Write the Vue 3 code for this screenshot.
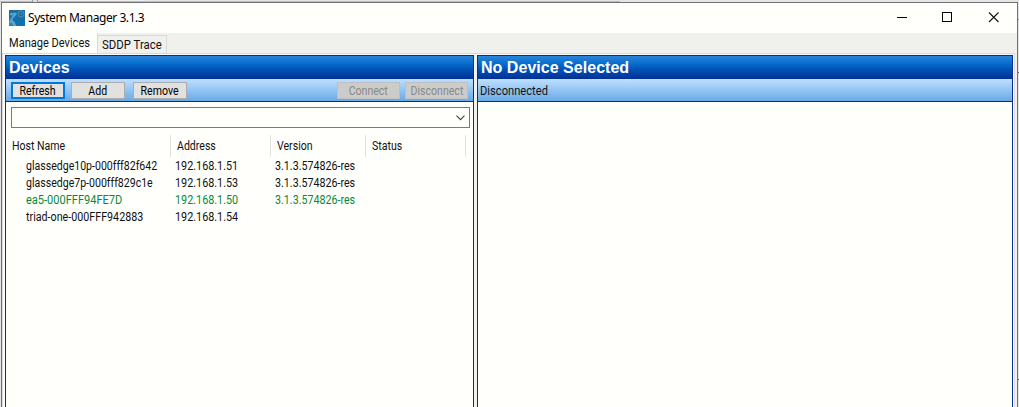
<script setup>
const devices = [
  { host: 'glassedge10p-000fff82f642', address: '192.168.1.51', version: '3.1.3.574826-res', w: 'w1' },
  { host: 'glassedge7p-000fff829c1e', address: '192.168.1.53', version: '3.1.3.574826-res', w: 'w2' },
  { host: 'ea5-000FFF94FE7D', address: '192.168.1.50', version: '3.1.3.574826-res', w: 'w3', green: true },
  { host: 'triad-one-000FFF942883', address: '192.168.1.54', version: '', w: 'w4' },
]
</script>

<template>
  <div class="desktop">
    <div class="backdrop"><i class="b1"></i><i class="b2"></i><i class="b3"></i><i class="b4"></i><i class="b5"></i><i class="b6"></i></div>
    <div class="window">
      <header class="titlebar">
        <svg class="logo" width="16" height="16" viewBox="0 0 16 16">
          <defs><linearGradient id="lg" x1="0" y1="0" x2="0" y2="1"><stop offset="0" stop-color="#1f6c9e" /><stop offset="1" stop-color="#0a72b4" /></linearGradient></defs>
          <rect width="16" height="16" fill="url(#lg)" />
          <path d="M1 3.200 7.300 2.600 7.600 4.400 4.800 7.600 3.200 9.800 5.600 12 7.500 16H0V11.500L1.800 8.300 4 5.300 1 5.300Z" fill="#5ba2cb" />
          <path d="M0 12.500 3.500 13.500 4.500 16H0Z" fill="#2f83b8" />
          <circle cx="12" cy="4" r="2.900" fill="none" stroke="#4687b2" stroke-width="1.100" />
          <circle cx="12" cy="4" r="1.100" fill="#4687b2" />
        </svg>
        <span class="title">System Manager 3.1.3</span>
        <svg class="controls" width="104" height="12" viewBox="0 0 104 12" shape-rendering="crispEdges">
          <path d="M0 5.500H10" stroke="#000" />
          <rect x="45.500" y=".5" width="9" height="9" fill="none" stroke="#000" />
          <path d="M92 .5 101.500 10M101.500 .5 92 10" stroke="#111" stroke-width="1.100" shape-rendering="auto" />
        </svg>
      </header>
      <nav class="tabs">
        <div class="tab active"><span class="t t-manage">Manage Devices</span></div>
        <div class="tab other"><span class="t t-trace">SDDP Trace</span></div>
      </nav>
      <main class="page">
        <section class="panel left">
          <h2>Devices</h2>
          <div class="toolbar">
            <button class="focus"><span class="t">Refresh</span></button>
            <button><span class="t">Add</span></button>
            <button><span class="t">Remove</span></button>
            <button class="off connect"><span class="t">Connect</span></button>
            <button class="off disc"><span class="t">Disconnect</span></button>
          </div>
          <div class="combo">
            <svg width="9" height="6" viewBox="0 0 9 6"><path d="M.5 .7 4.500 4.700 8.500 .7" fill="none" stroke="#444" stroke-width="1.200" /></svg>
          </div>
          <div class="row head">
            <div><span class="t">Host Name</span></div><div><span class="t">Address</span></div><div><span class="t">Version</span></div><div><span class="t">Status</span></div>
          </div>
          <div v-for="d in devices" :key="d.host" class="row" :class="{ green: d.green }">
            <div class="host"><span class="t" :class="d.w">{{ d.host }}</span></div>
            <div><span class="t ip">{{ d.address }}</span></div>
            <div><span class="t ver">{{ d.version }}</span></div>
            <div></div>
          </div>
        </section>
        <div class="splitter"></div>
        <section class="panel right">
          <h2>No Device Selected</h2>
          <div class="toolbar"><span class="t t-status">Disconnected</span></div>
        </section>
      </main>
    </div>
  </div>
</template>

<style>
body { overflow: hidden; }
</style>

<style scoped>
* { box-sizing: border-box; }
.desktop { position: relative; width: 1019px; height: 407px; overflow: hidden; background: #e5e5e5; padding: 2px 1px 0 1px; font: 12px Roboto, "Liberation Sans", sans-serif; color: #111; }
.backdrop i { position: absolute; background: #999; }
.backdrop .b1 { left: 0; top: 1px; width: 620px; height: 1px; background: #bcbcb9; }
.backdrop .b2 { left: 32px; top: 0; width: 6px; height: 2px; border: solid #999; border-width: 0 1px; background: #ddd; }
.backdrop .b3 { left: 1018px; top: 19px; width: 1px; height: 1px; }
.backdrop .b4 { left: 55px; top: 0; width: 90px; height: 1px; background: #eee; }
.backdrop .b5 { left: 1018px; top: 72px; width: 1px; height: 1px; background: #555; }
.backdrop .b6 { left: 1018px; top: 379px; width: 1px; height: 1px; background: #555; }
.window { width: 1017px; height: 405px; background: #f0f0ed; border: 1px solid #727272; border-bottom: 0; }
.titlebar { display: flex; align-items: center; height: 30px; padding-left: 7px; background: #fffffc; }
.title { margin-left: 3px; font: 12px/16px "Noto Sans", "Open Sans", sans-serif; letter-spacing: -.43px; white-space: nowrap; color: #000; }
.controls { margin: 0 16px 0 auto; }
.tabs { display: flex; height: 20px; align-items: flex-end; }
.tab { white-space: nowrap; line-height: 14px; }
.active { width: 96px; height: 20px; padding: 3px 0 0 7px; background: #fffffc; border-right: 1px solid #d9d9d7; }
.other { width: 69px; height: 18px; padding: 2px 0 0 4px; border: 1px solid #d9d9d7; border-left: 0; border-bottom: 0; }
.page { display: flex; height: 354px; margin-right: 2px; padding: 1px 1px 0 2px; border: solid #d9d9d7; border-width: 1px 1px 0 1px; background: #fcfcfa; }
.splitter { width: 3px; background: #f0f0ed; }
.panel { border: 1px solid #022f92; border-bottom: 0; background: #fffffc; height: 352px; }
.left { width: 469px; }
.right { width: 536px; }
h2 { margin: 0; height: 23px; padding-left: 3px; font: bold 16px/23px "Liberation Sans", sans-serif; letter-spacing: .03px; color: #fff; white-space: nowrap; background: linear-gradient(#2e83d7 0, #0871d0 30%, #0050b5 60%, #00349b 96%, #002c86 100%); }
.toolbar { display: flex; align-items: center; height: 23px; padding: 1px 0 0 5px; border-bottom: 1px solid #022f92; background: linear-gradient(#bfe0ff, #68a9e7); }
button { display: flex; flex: none; justify-content: center; align-items: center; width: 54px; height: 17px; padding: 1px 0 0; margin-right: 8px; border: 1px solid #adadad; background: #e1e1df; color: #000; font: inherit; line-height: 15px; white-space: nowrap; }
.focus { border: 2px solid #0078d7; margin-right: 6px; }
.connect { margin-left: 142px; width: 63px; margin-right: 5px; }
.disc { width: 63px; margin-right: 0; }
.off { color: #888; background: #cccccb; border-color: #bfbfbf; }
.right .toolbar { padding-left: 2px; }
.combo { display: flex; align-items: center; justify-content: flex-end; width: 459px; height: 21px; margin: 5px 0 0 5px; padding-right: 4px; border: 1px solid #7a7a7a; background: #fffffc; }
.row { display: grid; grid-template-columns: 160px 100px 95px 100px; height: 17px; margin-left: 5px; line-height: 17px; white-space: nowrap; }
.row > div { padding-left: 4px; }
.row > .host { padding-left: 15px; }
.t { display: inline-block; transform: scaleX(.88); transform-origin: left center; }
button .t { transform-origin: center; }
.t-manage { transform: scaleX(.92); }
.t-trace { transform: scaleX(.95); }
.t-status { transform: scaleX(.93); }
.w3 { transform: scaleX(.92); }
.w4 { transform: scaleX(.893); }
.ip { transform: scaleX(.9); }
.ver { transform: scaleX(.89); }
.head { height: 22px; margin: 7px 0 1px 5px; line-height: 22px; }
.head > div { padding-left: 6px; border-right: 1px solid #e2e2e2; }
.head > div:first-child { padding-left: 1px; }
.green { color: #078a38; }
</style>
